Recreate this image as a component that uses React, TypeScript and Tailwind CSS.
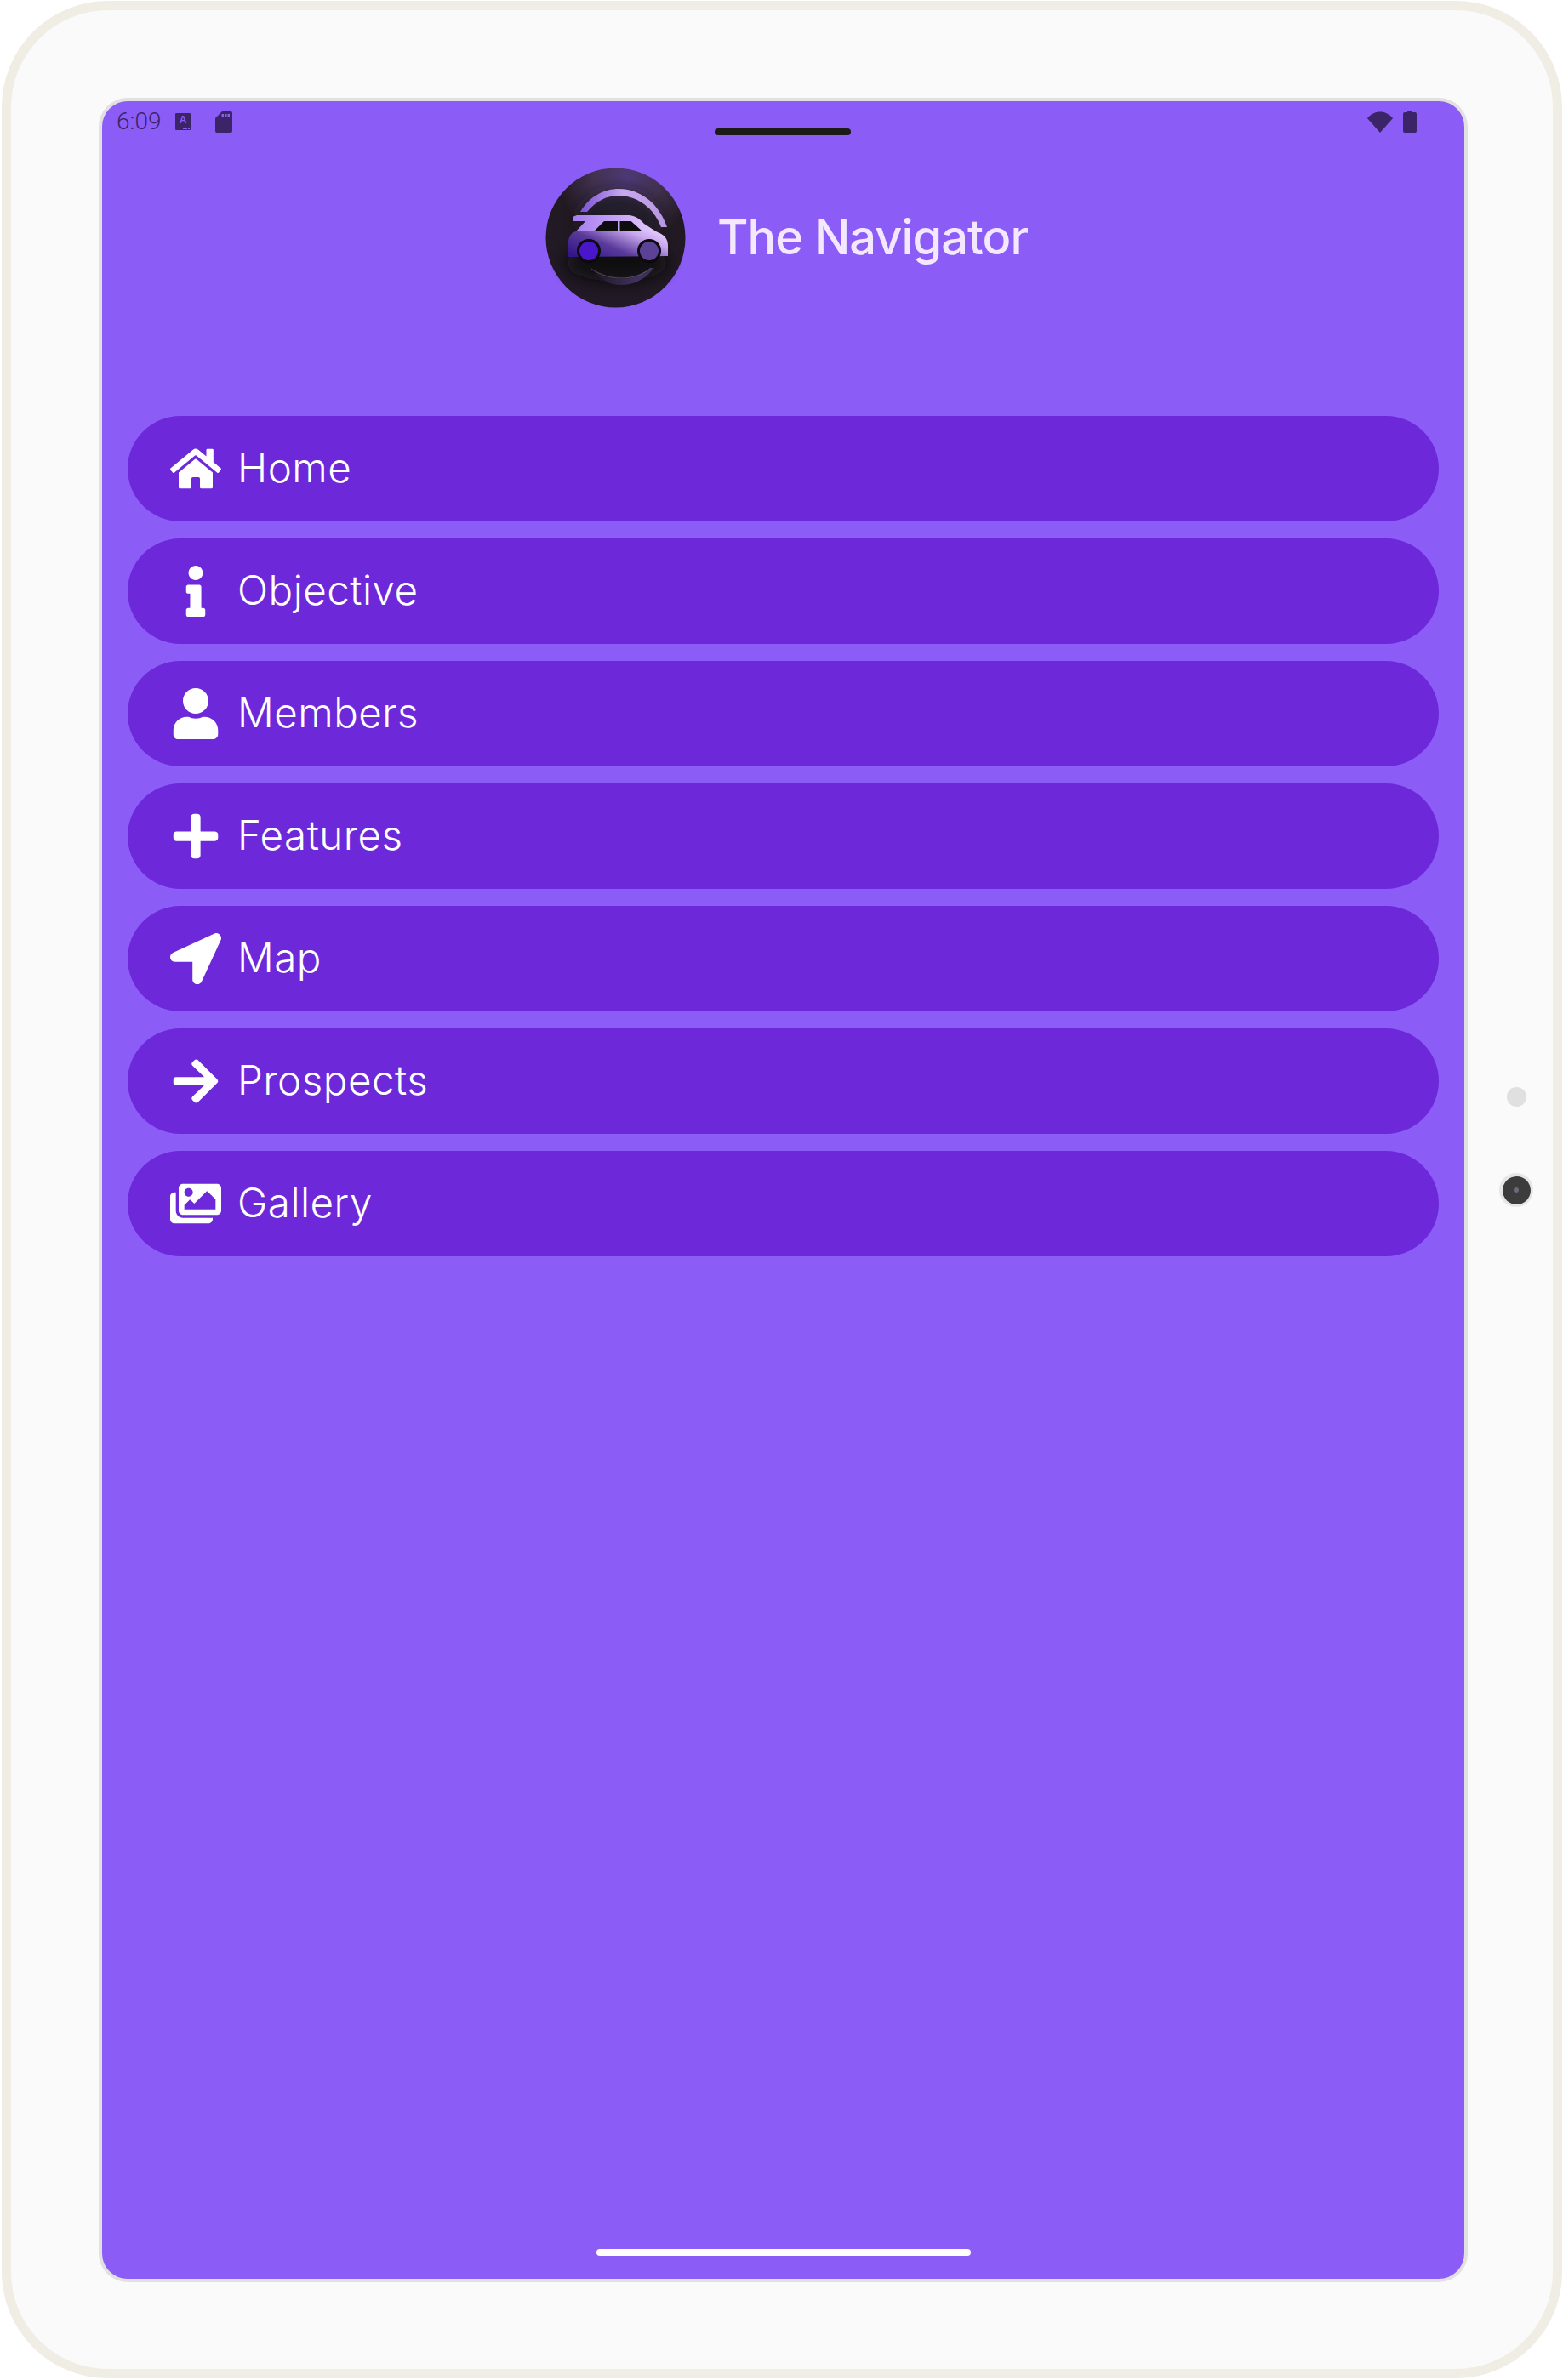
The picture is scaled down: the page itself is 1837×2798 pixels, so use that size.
import { FaArrowRight, FaHome, FaImages, FaInfo, FaLocationArrow, FaPlus, FaUser } from "react-icons/fa";

const MENU_ITEMS = [
  { title: "Home", icon: FaHome },
  { title: "Objective", icon: FaInfo },
  { title: "Members", icon: FaUser },
  { title: "Features", icon: FaPlus },
  { title: "Map", icon: FaLocationArrow },
  { title: "Prospects", icon: FaArrowRight },
  { title: "Gallery", icon: FaImages },
];

function Logo() {
  return (
    <svg width="165" height="165" viewBox="0 0 165 165" className="shrink-0">
      <defs>
        <radialGradient id="disc" cx="0.58" cy="0.08" r="0.95">
          <stop offset="0" stopColor="#4f3a78" />
          <stop offset="0.25" stopColor="#42324f" />
          <stop offset="0.5" stopColor="#221a22" />
          <stop offset="1" stopColor="#211926" />
        </radialGradient>
        <linearGradient id="body" x1="0" y1="0.8" x2="1" y2="0.2">
          <stop offset="0" stopColor="#35198a" />
          <stop offset="0.4" stopColor="#5a3a9a" />
          <stop offset="0.8" stopColor="#c9a8ee" />
          <stop offset="1" stopColor="#e2c8fa" />
        </linearGradient>
        <linearGradient id="arc" x1="0" y1="0.3" x2="1" y2="0.3">
          <stop offset="0" stopColor="#7a52d6" />
          <stop offset="0.5" stopColor="#c9a8f0" />
          <stop offset="1" stopColor="#b596e0" />
        </linearGradient>
        <linearGradient id="streak" x1="0" y1="0" x2="1" y2="0">
          <stop offset="0" stopColor="#a57cef" />
          <stop offset="1" stopColor="#e3c9fb" />
        </linearGradient>
        <linearGradient id="lowerArc" x1="0" y1="0" x2="1" y2="0">
          <stop offset="0" stopColor="#1c1720" />
          <stop offset="0.7" stopColor="#41305f" />
          <stop offset="1" stopColor="#3a3050" />
        </linearGradient>
        <filter id="soft" x="-40%" y="-40%" width="180%" height="180%">
          <feGaussianBlur stdDeviation="9" />
        </filter>
        <filter id="edge" x="-10%" y="-10%" width="120%" height="120%">
          <feGaussianBlur stdDeviation="0.4" />
        </filter>
      </defs>
      <circle cx="82.5" cy="82.5" r="82" fill="url(#disc)" />
      <ellipse cx="84" cy="112" rx="60" ry="22" fill="#0b0d0c" opacity="0.85" filter="url(#soft)" />
      <ellipse cx="86" cy="60" rx="48" ry="34" fill="#16121a" opacity="0.7" filter="url(#soft)" />
      <g filter="url(#edge)">
        <path d="M41 52 C52 33 70 25 86 25 C112 25 133 42 143 70 L136 70 C127 47 108 33 86 33 C72 33 60 39 49 52 Z" fill="url(#arc)" />
        <path d="M54 119 C66 134 78 138 88 138 C106 138 118 130 128 118 L124 118 C112 127 100 131 90 131 C78 131 66 127 54 119 Z" fill="url(#lowerArc)" />
        <path d="M54 119 C66 127 78 130 90 130 C102 130 114 126 124 118" fill="none" stroke="#8a8296" strokeWidth="0.5" />
        <path d="M32 75 L130 75 L132 76 C140 79 144 84 144 92 L144 104 L27 105 L27 86 C28 80 31 76 36 75 Z" fill="url(#body)" />
        <path d="M32 58 L37 56 L99 56 C106 57 112 61 116 66 L130 75 L36 75 L47 63 L32 63 Z" fill="url(#streak)" />
        <path d="M57 75 L69 63 L85 63 L85 75 Z" fill="#0c0a10" />
        <path d="M87.500 63 L100.700 63 L114 75 L87.500 75 Z" fill="#0c0a10" />
        <circle cx="51" cy="98" r="14" fill="#08070b" />
        <circle cx="51" cy="98" r="11" fill="#4a16c9" />
        <circle cx="122" cy="98" r="14" fill="#08070b" />
        <circle cx="122" cy="98" r="11" fill="#5c4397" />
      </g>
    </svg>
  );
}

function StatusBar() {
  return (
    <div className="flex h-[38px] items-center justify-between pl-[17px] pr-[56px] text-[#3b2467]">
      <div className="flex items-center">
        <span className="w-[69px] text-[28px] leading-none font-light [font-family:Roboto,sans-serif]">6:09</span>
        <div className="relative flex h-[20px] w-[18px] items-start justify-center rounded-[1px] bg-[#3b2467] pt-[2px]">
          <span className="text-[12px] leading-[12px] font-bold text-[#8b5cf6] [font-family:'Liberation_Sans',sans-serif]">A</span>
          <div className="absolute right-[1px] bottom-[1px] flex gap-[1px]">
            <i className="h-[2px] w-[2px] bg-[#8b5cf6]" />
            <i className="h-[2px] w-[2px] bg-[#8b5cf6]" />
            <i className="h-[2px] w-[2px] bg-[#8b5cf6]" />
          </div>
        </div>
        <svg width="20" height="25" viewBox="0 0 20 25" className="ml-[29px]">
          <path d="M8 0H18a2 2 0 0 1 2 2V23a2 2 0 0 1-2 2H2a2 2 0 0 1-2-2V8Z" fill="#3b2467" />
          <path d="M7.500 3h2.500v4h-2.500zM11 3h2.500v4H11zM14.500 3h2.500v4h-2.500z" fill="#8b5cf6" />
        </svg>
      </div>
      <div className="flex items-center gap-[12px]">
        <svg width="30" height="25" viewBox="0 0 30 25">
          <path d="M0 8 C8 -2 22 -2 30 8 L15 25 Z" fill="#3b2467" />
        </svg>
        <svg width="16" height="26" viewBox="0 0 16 26">
          <path d="M5 0H11V2H14a2 2 0 0 1 2 2V24a2 2 0 0 1-2 2H2a2 2 0 0 1-2-2V4a2 2 0 0 1 2-2H5Z" fill="#3b2467" />
        </svg>
      </div>
    </div>
  );
}

export default function App() {
  return (
    <div className="h-[2798px] w-[1837px] bg-white pt-px pr-px pb-[2px] pl-[2px]">
      <div className="relative h-full w-full rounded-[125px] border-[11px] border-[#f0ede4] bg-[#fafafa] pt-[103px] pr-[100px] pb-[102px] pl-[103px]">
        <div className="relative flex h-full flex-col overflow-hidden rounded-[34px] border-4 border-[#e1e1e1] bg-[#8b5cf6] pt-[5px]">
          <div className="absolute top-[32px] left-[720px] h-[8px] w-[160px] rounded-full bg-[#1c1b17]" />
          <StatusBar />
          <div className="mt-[35px] ml-[8px] flex items-center justify-center gap-[37px]">
            <Logo />
            <span className="mb-[2px] text-[56px] leading-none font-medium tracking-[-1px] text-[#f3e8ff] [font-family:Inter,sans-serif]">
              The Navigator
            </span>
          </div>
          <div className="mt-[127px] flex flex-col gap-[20px] px-[30px]">
            {MENU_ITEMS.map(item => (
              <div key={item.title} className="flex h-[124px] items-center gap-[19px] rounded-[62px] bg-[#6d28d9] pl-[50px]">
                <item.icon size={60} color="#ffffff" />
                <span className="mb-[3px] text-[47.500px] leading-none font-[350] tracking-[0.5px] text-white [font-family:Inter,sans-serif]">{item.title}</span>
              </div>
            ))}
          </div>
          <div className="mx-auto mt-auto mb-[27px] h-[8px] w-[440px] rounded-full bg-white" />
        </div>
        <div className="absolute top-[1266px] right-[23px] flex flex-col items-center gap-[78px]">
          <div className="h-[23px] w-[23px] rounded-full bg-[#e0e0e0]" />
          <div className="flex h-[40px] w-[40px] items-center justify-center rounded-full bg-[#e6e6e6]">
            <div className="flex h-[33px] w-[33px] items-center justify-center rounded-full bg-[#3c3c3c]">
              <div className="h-[6px] w-[6px] rounded-full bg-[#6a6a78]" />
            </div>
          </div>
        </div>
      </div>
    </div>
  );
}
